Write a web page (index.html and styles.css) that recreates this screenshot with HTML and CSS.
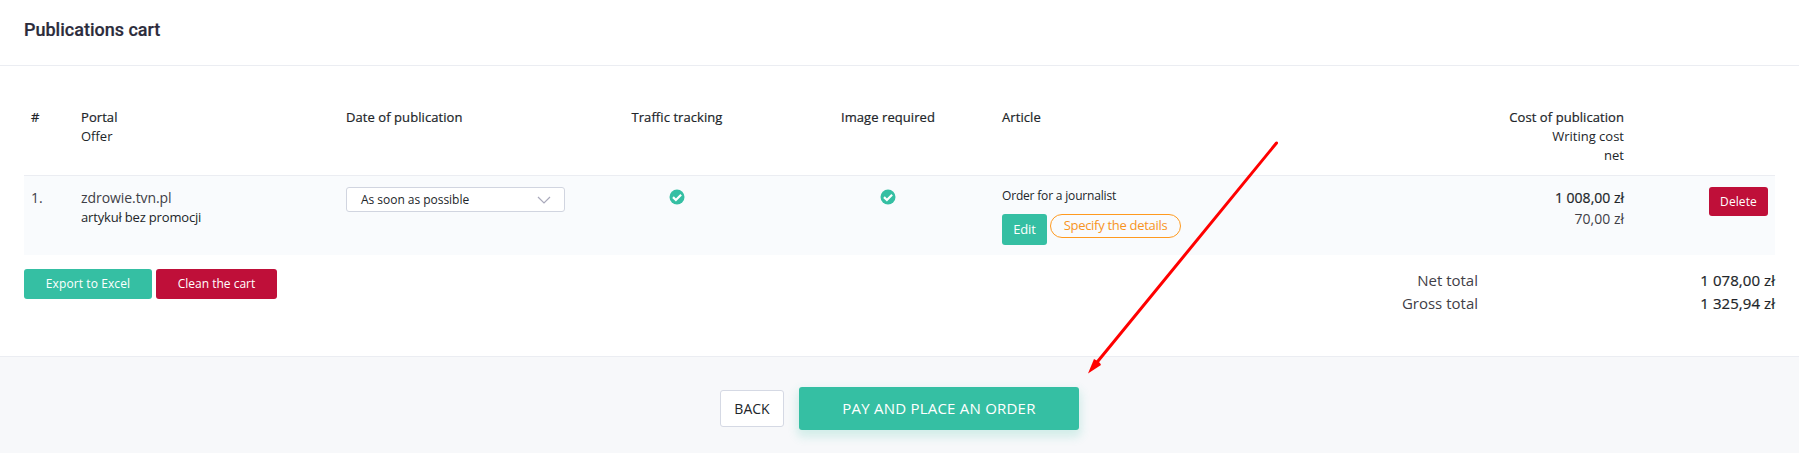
FILE: index.html
```html
<!DOCTYPE html>
<html lang="en">
<head>
<meta charset="utf-8">
<title>Publications cart</title>
<link rel="stylesheet" href="styles.css">
</head>
<body>
<header class="head"><h1 class="title">Publications cart</h1></header>
<main class="content">
  <div class="row row-head">
    <div class="strong">#</div>
    <div><div class="strong">Portal</div><div>Offer</div></div>
    <div class="strong">Date of publication</div>
    <div class="strong center">Traffic tracking</div>
    <div class="strong center">Image required</div>
    <div class="strong">Article</div>
    <div class="right"><div class="strong">Cost of publication</div><div>Writing cost</div><div>net</div></div>
    <div></div>
  </div>
  <div class="row row-item">
    <div class="num">1.</div>
    <div><div class="portal">zdrowie.tvn.pl</div><div class="offer">artykuł bez promocji</div></div>
    <div><div class="select"><span>As soon as possible</span><svg width="14" height="8" viewBox="0 0 14 8"><path d="M1 1l6 6 6-6" fill="none" stroke="#a9a9bb" stroke-width="1.2"/></svg></div></div>
    <div class="center"><svg class="check" viewBox="0 0 16 16"><circle cx="8" cy="8" r="7.5" fill="#35bfa3"/><path d="M4 8.1l2.9 2.9 5.2-5.3" fill="none" stroke="#fff" stroke-width="2.2"/></svg></div>
    <div class="center"><svg class="check" viewBox="0 0 16 16"><circle cx="8" cy="8" r="7.5" fill="#35bfa3"/><path d="M4 8.1l2.9 2.9 5.2-5.3" fill="none" stroke="#fff" stroke-width="2.2"/></svg></div>
    <div><div class="journalist">Order for a journalist</div><div class="article-actions"><a class="btn green edit">Edit</a><a class="pill">Specify the details</a></div></div>
    <div class="right costs"><div class="strong">1 008,00 zł</div><div>70,00 zł</div></div>
    <div class="delete-cell"><a class="btn red delete">Delete</a></div>
  </div>
  <div class="summary">
    <div class="cart-actions"><a class="btn green export">Export to Excel</a><a class="btn red clean">Clean the cart</a></div>
    <div class="totals"><span>Net total</span><span class="strong">1 078,00 zł</span><span>Gross total</span><span class="strong">1 325,94 zł</span></div>
  </div>
</main>
<footer class="foot"><a class="back">BACK</a><a class="btn green pay">PAY AND PLACE AN ORDER</a></footer>
<svg class="arrow" width="200" height="240" viewBox="0 0 200 240"><path d="M188.500 8L8 228.500" stroke="#f00" stroke-width="3" stroke-linecap="round"/><path d="M0 238.500L6 224 9.500 226 12 228 13 230z" fill="#f00"/></svg>
</body>
</html>
```
FILE: styles.css
```css
* { box-sizing: border-box; }
body { margin: 0; height: 453px; overflow: hidden; position: relative; display: flex; flex-direction: column; background: #fff; color: #212529; font: 13px/19px "Open Sans", sans-serif; }
.head { height: 66px; flex: none; border-bottom: 1px solid #ebedf2; padding: 18px 24px; }
.title { margin: 0; font: 500 18px/24px Roboto, sans-serif; color: #2b2b3b; -webkit-text-stroke: .2px; }
.content { height: 290px; flex: none; padding: 34px 24px 0; }
.strong { font-weight: 500; -webkit-text-stroke: .2px; letter-spacing: .07px; }
.center { text-align: center; }
.right { text-align: right; }
.row { display: grid; grid-template-columns: 50px 265px 223px 211px 222px 187px 435px 151px; padding: 0 0 0 7px; }
.row-head { height: 75px; padding-top: 8px; }
.row-item { height: 80px; background: #f9fbfd; border-top: 1px solid #ebedf2; }
.row .center { width: 216px; }
.num, .portal, .costs { font-size: 14px; line-height: 21px; padding-top: 11px; color: #3f4047; }
.portal { letter-spacing: -.07px; }
.offer { letter-spacing: -.17px; }
.costs .strong { color: #212529; letter-spacing: 0; }
.select { margin-top: 11px; width: 219px; height: 25px; border: 1px solid #d1d5e0; border-radius: 3px; background: #fff; font-size: 12px; padding: 0 13px 0 14px; display: flex; align-items: center; justify-content: space-between; letter-spacing: -.03px; }
.check { width: 16px; height: 16px; display: block; margin: 13px auto 0; }
.journalist { font-size: 12px; line-height: 18px; padding-top: 11px; letter-spacing: -.18px; }
.article-actions { display: flex; gap: 3px; margin-top: 9px; align-items: flex-start; }
.btn { color: #fff; border-radius: 3px; display: flex; align-items: center; justify-content: center; font-size: 12px; }
.green { background: #35bfa3; }
.red { background: #bf0f39; }
.edit { width: 45px; height: 31px; font-size: 13px; letter-spacing: -.1px; }
.pill { width: 131px; height: 24px; border: 1px solid #ff9a1f; border-radius: 12px; color: #f7941d; line-height: 21px; text-align: center; letter-spacing: -.3px; }
.delete-cell { display: flex; justify-content: flex-end; padding: 11px 7px 0 0; }
.delete { width: 59px; height: 29px; letter-spacing: .1px; }
.summary { display: flex; justify-content: space-between; padding-top: 14px; }
.cart-actions { display: flex; gap: 4px; }
.export { width: 128px; height: 30px; padding-bottom: 1px; letter-spacing: .1px; }
.clean { width: 121px; height: 30px; padding-bottom: 1px; }
.totals { display: grid; grid-template-columns: 120px 297px; text-align: right; font-size: 15px; line-height: 23px; color: #3f4047; }
.totals .strong { color: #212529; }
.foot { flex: 1; background: #f7f8fa; border-top: 1px solid #ebedf2; display: flex; justify-content: center; align-items: flex-start; gap: 15px; padding-top: 30px; }
.back { margin-top: 3px; width: 64px; height: 37px; border: 1px solid #d5d9e4; border-radius: 3px; background: #fff; font-size: 14px; line-height: 35px; text-align: center; }
.pay { width: 280px; height: 43px; font-size: 15px; letter-spacing: .22px; box-shadow: 0 5px 10px 2px rgba(53,191,163,.19); }
.arrow { position: absolute; left: 1088px; top: 135px; fill: none; }
```
